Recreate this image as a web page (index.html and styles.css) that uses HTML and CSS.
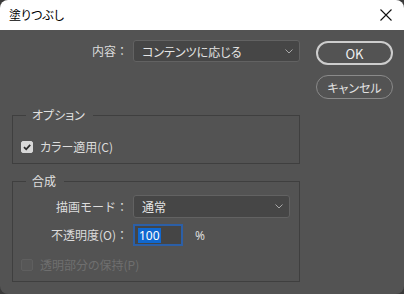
FILE: index.html
```html
<!DOCTYPE html>
<html lang="ja">
<head>
    <meta charset="UTF-8">
    <meta name="viewport" content="width=device-width, initial-scale=1.0">
    <title>塗りつぶし</title>
    <link rel="stylesheet" href="styles.css">
</head>
<body>
    <div class="window">
        <div class="titlebar">
            <span class="title">塗りつぶし</span>
            <svg class="close" width="12" height="12" viewBox="0 0 12 12">
                <path d="M0.5 0.5L11.5 11.5M11.5 0.5L0.5 11.5" stroke="#111" stroke-width="1.1" fill="none"/>
            </svg>
        </div>

        <div class="content">
            <div class="main">
                <div class="row">
                    <span class="label label-top">内容：</span>
                    <div class="select select-wide">
                        <span>コンテンツに応じる</span>
                        <svg class="chevron" width="8" height="5" viewBox="0 0 8 5">
                            <path d="M0.5 0.5L4 4L7.5 0.5" stroke="#a8a8a8" stroke-width="1" fill="none"/>
                        </svg>
                    </div>
                </div>

                <fieldset class="group group-options">
                    <legend>オプション</legend>
                    <div class="check-row">
                        <span class="checkbox checked">
                            <svg width="10" height="10" viewBox="0 0 10 10">
                                <path d="M2 5.2L4.2 7.3L8.2 2.8" stroke="#2a2a2a" stroke-width="1.8" fill="none"/>
                            </svg>
                        </span>
                        <span>カラー適用(C)</span>
                    </div>
                </fieldset>

                <fieldset class="group group-blend">
                    <legend>合成</legend>
                    <div class="row row-mode">
                        <span class="label">描画モード：</span>
                        <div class="select select-mode">
                            <span>通常</span>
                            <svg class="chevron" width="8" height="5" viewBox="0 0 8 5">
                                <path d="M0.5 0.5L4 4L7.5 0.5" stroke="#a8a8a8" stroke-width="1" fill="none"/>
                            </svg>
                        </div>
                    </div>
                    <div class="row row-opacity">
                        <span class="label">不透明度(O)：</span>
                        <div class="number-field"><span class="selected">100</span></div>
                        <span class="unit">%</span>
                    </div>
                    <div class="check-row disabled">
                        <span class="checkbox"></span>
                        <span>透明部分の保持(P)</span>
                    </div>
                </fieldset>
            </div>

            <div class="buttons">
                <button class="btn btn-primary">OK</button>
                <button class="btn">キャンセル</button>
            </div>
        </div>
    </div>
</body>
</html>
```

FILE: styles.css
```css
body {
    margin: 0;
    padding: 0;
    background-color: #3a3a3a;
    font-family: "Noto Sans CJK JP", "Noto Sans", sans-serif;
    font-size: 12px;
    font-feature-settings: "palt";
    overflow: hidden;
}

.window {
    width: 404px;
    height: 294px;
    border-radius: 8px;
    overflow: hidden;
    display: flex;
    flex-direction: column;
}

.titlebar {
    height: 30px;
    background-color: #fff;
    display: flex;
    align-items: center;
    justify-content: space-between;
    padding: 0 12px 0 9px;
    flex-shrink: 0;
}

.title {
    color: #000;
    font-size: 12px;
    line-height: 16px;
}

.close {
    display: block;
}

.content {
    flex: 1;
    background-color: #535353;
    color: #dcdcdc;
    display: flex;
    padding: 10px 0 0 12px;
}

.main {
    width: 288px;
}

.row {
    display: flex;
    align-items: center;
    gap: 5px;
}

.label {
    width: 107px;
    text-align: right;
    line-height: 16px;
    flex-shrink: 0;
    font-feature-settings: normal;
}

.label-top {
    width: 116px;
}

.select {
    height: 22px;
    box-sizing: border-box;
    background-color: #464646;
    border: 1px solid #626262;
    border-radius: 3px;
    display: flex;
    align-items: center;
    justify-content: space-between;
    padding: 0 6px 0 8px;
    color: #e4e4e4;
}

.select-wide {
    width: 167px;
}

.select-mode {
    width: 157px;
    height: 23px;
}

.chevron {
    display: block;
}

/* groups */
.group {
    margin: 45px 0 0 0;
    padding: 0 8px 8px 8px;
    border: 1px solid #3f3f3f;
    min-inline-size: auto;
}

.group legend {
    margin-left: 5px;
    padding: 0 8px 0 6px;
    line-height: 16px;
    color: #e0e0e0;
}

.group-blend {
    margin-top: 9px;
}

.check-row {
    display: flex;
    align-items: center;
    gap: 7px;
    line-height: 16px;
    margin-top: 16px;
}

.checkbox {
    width: 12px;
    height: 12px;
    box-sizing: border-box;
    border-radius: 2px;
    border: 1px solid #5f5f5f;
    background-color: #575757;
    display: flex;
    align-items: center;
    justify-content: center;
}

.checkbox.checked {
    background-color: #d8d8d8;
    border-color: #d8d8d8;
}

.check-row.disabled {
    color: #6f6f6f;
    margin-top: 11px;
}

.row-mode {
    margin-top: 6px;
}

.row-opacity {
    margin-top: 6px;
}

.number-field {
    width: 50px;
    height: 22px;
    box-sizing: border-box;
    border: 2px solid #2c5fa6;
    background-color: #454545;
    display: flex;
    align-items: center;
    padding-left: 3px;
}

.selected {
    background-color: #1068d0;
    color: #fff;
    line-height: 15px;
    padding: 0 1px;
    font-family: "Noto Sans", sans-serif;
}

.unit {
    margin-left: 7px;
    font-family: "Noto Sans", sans-serif;
}

/* buttons */
.buttons {
    display: flex;
    flex-direction: column;
    gap: 10px;
    margin: 1px 0 0 16px;
}

.btn {
    width: 77px;
    height: 24px;
    box-sizing: border-box;
    border-radius: 12px;
    border: 1px solid #8a8a8a;
    background-color: transparent;
    color: #e2e2e2;
    font-family: "Noto Sans CJK JP", "Noto Sans", sans-serif;
    font-size: 12px;
    font-feature-settings: "palt";
    padding: 0;
}

.btn-primary {
    border: 2px solid #cdcdcd;
    font-size: 13px;
    color: #f0f0f0;
}
```
